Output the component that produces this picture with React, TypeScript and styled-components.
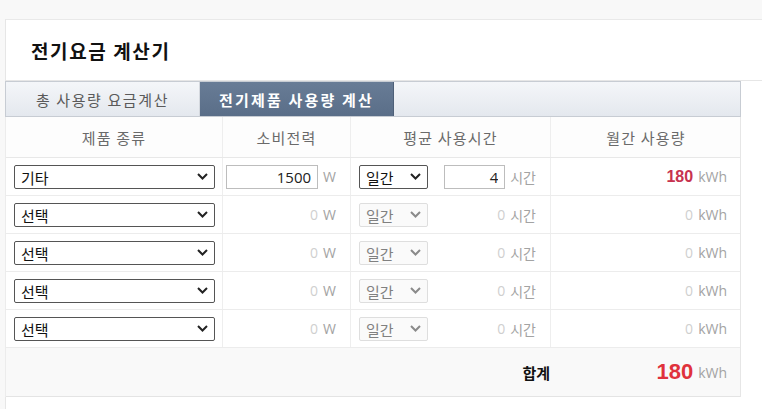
import styled, { createGlobalStyle } from "styled-components";

const GlobalStyle = createGlobalStyle`
  html, body {
    margin: 0;
    padding: 0;
    background: #f8f8f8;
    overflow: hidden;
    font-family: "Noto Sans CJK KR", "Noto Sans", sans-serif;
  }
  * {
    box-sizing: border-box;
  }
`;

type Item = {
  product: string;
  watt: number;
  hours: number;
  active: boolean;
};

const items: Item[] = [
  { product: "기타", watt: 1500, hours: 4, active: true },
  { product: "선택", watt: 0, hours: 0, active: false },
  { product: "선택", watt: 0, hours: 0, active: false },
  { product: "선택", watt: 0, hours: 0, active: false },
  { product: "선택", watt: 0, hours: 0, active: false },
];

const COLS = "216px 128px 200px 191px";

function Chevron({ muted }: { muted?: boolean }) {
  return (
    <ChevronBox>
      <svg width="11" height="7" viewBox="0 0 11 7">
        <polyline
          points="1,1 5.5,5.5 10,1"
          fill="none"
          stroke={muted ? "#8a8a8a" : "#222"}
          strokeWidth="2"
        />
      </svg>
    </ChevronBox>
  );
}

export default function App() {
  const total = items.reduce((s, i) => s + (i.watt * i.hours * 30) / 1000, 0);
  return (
    <>
      <GlobalStyle />
      <Card>
        <Title>
          <TitleText>전기요금 계산기</TitleText>
        </Title>
        <Content>
          <TabBar>
            <Tab>총 사용량 요금계산</Tab>
            <Tab $active>전기제품 사용량 계산</Tab>
          </TabBar>
          <Table>
            <HeadRow>
              <HeadCell>제품 종류</HeadCell>
              <HeadCell>소비전력</HeadCell>
              <HeadCell>평균 사용시간</HeadCell>
              <HeadCell>월간 사용량</HeadCell>
            </HeadRow>
            {items.map((it, idx) => {
              const usage = (it.watt * it.hours * 30) / 1000;
              return (
                <Row key={idx}>
                  <Cell $padRight={0}>
                    <SelectWrap $width={201}>
                      <Select>
                        <option>{it.product}</option>
                      </Select>
                      <Chevron />
                    </SelectWrap>
                  </Cell>
                  <Cell $align="flex-end">
                    {it.active ? (
                      <NumInput $width={92} defaultValue={it.watt} />
                    ) : (
                      <Zero>{it.watt}</Zero>
                    )}
                    <Unit>W</Unit>
                  </Cell>
                  <Cell $align="space-between">
                    <SelectWrap $width={69}>
                      <Select $muted={!it.active} disabled={!it.active}>
                        <option>일간</option>
                      </Select>
                      <Chevron muted={!it.active} />
                    </SelectWrap>
                    <Right>
                      {it.active ? (
                        <NumInput $width={61} defaultValue={it.hours} />
                      ) : (
                        <Zero>{it.hours}</Zero>
                      )}
                      <Unit>시간</Unit>
                    </Right>
                  </Cell>
                  <Cell $align="flex-end">
                    {it.active ? <Usage>{usage}</Usage> : <Zero>{usage}</Zero>}
                    <Unit>kWh</Unit>
                  </Cell>
                </Row>
              );
            })}
            <TotalRow>
              <TotalLabel>합계</TotalLabel>
              <TotalValue>
                <Big>{total}</Big>
                <Unit>kWh</Unit>
              </TotalValue>
            </TotalRow>
          </Table>
        </Content>
      </Card>
    </>
  );
}

const Card = styled.div`
  margin: 19px 0 0 5px;
  width: 800px;
  height: 420px;
  background: #fff;
  border-top: 1px solid #e9e9e9;
  border-left: 1px solid #e6e6e6;
`;

const Title = styled.div`
  height: 61px;
  display: flex;
  align-items: center;
  border-bottom: 1px solid #e6e6e6;
`;

const TitleText = styled.h1`
  margin: 0 0 0 25px;
  font-size: 19px;
  font-weight: 700;
  letter-spacing: 1.6px;
  color: #111;
`;

const Content = styled.div`
  width: 736px;
  margin-left: -1px;
`;

const TabBar = styled.div`
  display: flex;
  height: 36px;
  border: 1px solid #c7ccd3;
  background: linear-gradient(#f4f6f9, #e4e8ee);
`;

const Tab = styled.div<{ $active?: boolean }>`
  width: 194px;
  display: flex;
  align-items: center;
  justify-content: center;
  font-size: 15px;
  letter-spacing: ${({ $active }) => ($active ? "2.2px" : "1.6px")};
  font-weight: ${({ $active }) => ($active ? 700 : 400)};
  color: ${({ $active }) => ($active ? "#fff" : "#5a5a5a")};
  background: ${({ $active }) =>
    $active ? "linear-gradient(#687c96, #5a6e88)" : "transparent"};
  border-right: 1px solid ${({ $active }) => ($active ? "#4e6078" : "#d4d8de")};
`;

const Table = styled.div`
  border-right: 1px solid #e6e6e6;
  border-left: 1px solid #ececec;
`;

const HeadRow = styled.div`
  display: grid;
  grid-template-columns: ${COLS};
  height: 41px;
  background: #fdfdfd;
  border-bottom: 1px solid #e8e8e8;
`;

const HeadCell = styled.div`
  display: flex;
  align-items: center;
  justify-content: center;
  font-size: 15px;
  letter-spacing: 1.2px;
  color: #6a6a6a;
  border-left: 1px solid #eeeeee;
  &:first-child {
    border-left: none;
  }
`;

const Row = styled.div`
  display: grid;
  grid-template-columns: ${COLS};
  height: 38px;
  border-bottom: 1px solid #ececec;
`;

const Cell = styled.div<{ $align?: string; $padRight?: number }>`
  display: flex;
  align-items: center;
  justify-content: ${({ $align }) => $align || "flex-start"};
  gap: 5px;
  padding: 0 ${({ $padRight }) => $padRight ?? 14}px 0 8px;
  border-left: 1px solid #eeeeee;
  &:first-child {
    border-left: none;
  }
`;

const Right = styled.div`
  display: flex;
  align-items: center;
  gap: 5px;
`;

const SelectWrap = styled.div<{ $width: number }>`
  position: relative;
  flex-shrink: 0;
  width: ${({ $width }) => $width}px;
  height: 24px;
`;

const Select = styled.select<{ $muted?: boolean }>`
  appearance: none;
  width: 100%;
  height: 100%;
  margin: 0;
  padding: 0 0 0 6px;
  font-family: "Noto Sans CJK KR", sans-serif;
  font-size: 15px;
  color: ${({ $muted }) => ($muted ? "#808080" : "#111")};
  background: ${({ $muted }) => ($muted ? "#fafafa" : "#fff")};
  border: 1px solid ${({ $muted }) => ($muted ? "#dedede" : "#555")};
  border-radius: 2px;
  opacity: 1;
`;

const ChevronBox = styled.span`
  position: absolute;
  right: 7px;
  top: 8px;
  display: flex;
  pointer-events: none;
`;

const NumInput = styled.input<{ $width: number }>`
  width: ${({ $width }) => $width}px;
  flex-shrink: 0;
  height: 24px;
  margin: 0;
  padding: 0 6px;
  text-align: right;
  font-family: "Open Sans", "Noto Sans", sans-serif;
  font-size: 15px;
  color: #222;
  border: 1px solid #bdbdbd;
  border-radius: 0;
`;

const Zero = styled.span`
  font-family: "Open Sans", sans-serif;
  font-size: 14px;
  color: #cfcfcf;
`;

const Unit = styled.span`
  font-family: "Open Sans", "Noto Sans CJK KR", sans-serif;
  font-size: 14px;
  color: #a3a3a3;
`;

const Usage = styled.span`
  font-family: "Liberation Sans", sans-serif;
  font-size: 16px;
  font-weight: 700;
  color: #c7324f;
`;

const TotalRow = styled.div`
  display: grid;
  grid-template-columns: 544px 191px;
  height: 49px;
  background: #f9f9f9;
  border-bottom: 1px solid #e4e4e4;
`;

const TotalLabel = styled.div`
  display: flex;
  align-items: center;
  justify-content: flex-end;
  font-size: 15px;
  font-weight: 700;
  color: #111;
`;

const TotalValue = styled.div`
  display: flex;
  align-items: center;
  justify-content: flex-end;
  gap: 5px;
  padding-right: 14px;
`;

const Big = styled.span`
  font-family: "Liberation Sans", sans-serif;
  font-size: 22px;
  font-weight: 700;
  color: #e0323c;
`;
